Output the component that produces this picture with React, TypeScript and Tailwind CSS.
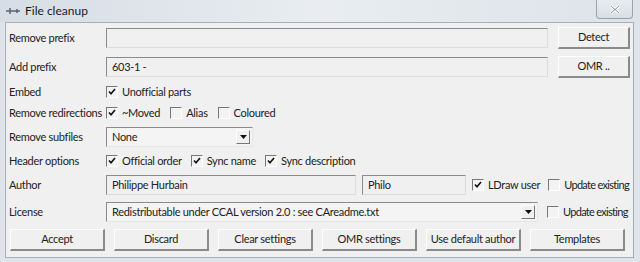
import React from "react";

const font = { fontFamily: 'Lato, "Liberation Sans", sans-serif' };

function Edit({ value, className }: { value?: string; className?: string }) {
  return (
    <div
      className={`shrink-0 h-[20px] border-t border-l border-t-[#8a8a8a] border-l-[#8a8a8a] border-b border-r border-b-[#dcdcdc] border-r-[#dcdcdc] bg-[#f0f0f0] px-[5px] flex items-center text-[11px] tracking-[-0.3px] text-[#222] whitespace-nowrap ${className ?? ""}`}
    >
      {value}
    </div>
  );
}

function Combo({ value, className }: { value: string; className?: string }) {
  return (
    <div
      className={`shrink-0 h-[20px] border-t border-l border-t-[#8a8a8a] border-l-[#8a8a8a] border-b border-r border-b-[#e6e6e6] border-r-[#e6e6e6] bg-[#f4f4f4] pl-[5px] pr-[2px] flex items-center text-[11px] tracking-[-0.3px] text-[#222] whitespace-nowrap ${className ?? ""}`}
    >
      <span className="flex-1">{value}</span>
      <span className="w-[14px] h-[14px] flex items-center justify-center border-t border-l border-white border-b border-r border-b-[#777] border-r-[#777] bg-[#f0f0f0]">
        <svg width="7" height="4" viewBox="0 0 7 4">
          <path d="M0 0h7L3.5 4z" fill="#111" />
        </svg>
      </span>
    </div>
  );
}

function Check({ label, checked, tight }: { label: string; checked?: boolean; tight?: boolean }) {
  return (
    <div className="shrink-0 flex items-center gap-[4px] h-[14px] whitespace-nowrap">
      <span className="w-[12px] h-[12px] shrink-0 border-t border-l border-t-[#777] border-l-[#777] border-b border-r border-b-[#fff] border-r-[#fff] bg-[#f3f3f3] flex items-center justify-center">
        {checked && (
          <svg width="8" height="8" viewBox="0 0 8 8">
            <path d="M1 3.5l2 2.3L7 1" stroke="#111" strokeWidth="1.6" fill="none" />
          </svg>
        )}
      </span>
      <span className={`text-[11px] text-[#222] ${tight ? "tracking-[-0.7px]" : "tracking-[-0.3px]"}`}>{label}</span>
    </div>
  );
}

function Btn({ label, className }: { label: string; className?: string }) {
  return (
    <div
      className={`shrink-0 h-[22px] border-t border-l border-white border-b-2 border-r-2 border-b-[#8a8a8a] border-r-[#8a8a8a] bg-[#f0f0f0] flex items-center justify-center text-[11px] tracking-[-0.3px] text-[#222] whitespace-nowrap ${className ?? ""}`}
    >
      {label}
    </div>
  );
}

function Label({ children }: { children: React.ReactNode }) {
  return (
    <div className="w-[100px] shrink-0 pl-[3px] text-[11px] tracking-[-0.3px] text-[#222] whitespace-nowrap">
      {children}
    </div>
  );
}

export default function App() {
  return (
    <div className="w-[640px] h-[262px] bg-[#dfe4ea] overflow-hidden relative" style={font}>
      {/* Title bar */}
      <div className="h-[22px] flex items-center pl-[5px] bg-gradient-to-r from-[#d6dde5] via-[#e9edf1] to-[#dde3e9]">
        <svg width="16" height="10" viewBox="0 0 16 10" className="mr-[4px]">
          <path d="M1 5h14M5 2v6M12 3v4" stroke="#55657a" strokeWidth="1.5" fill="none" />
        </svg>
        <span className="text-[12px] text-[#1a1a1a]">File cleanup</span>
      </div>
      <div className="absolute right-[7px] top-0 w-[37px] h-[19px] rounded-b-[4px] border border-t-0 border-[#9aa3ad] bg-gradient-to-b from-[#e8ecf0] to-[#d8dee5] flex items-center justify-center">
        <svg width="10" height="9" viewBox="0 0 10 9">
          <path d="M1 1l8 7M9 1L1 8" stroke="#fff" strokeWidth="3" />
          <path d="M1 1l8 7M9 1L1 8" stroke="#8a929c" strokeWidth="1" />
        </svg>
      </div>

      {/* Client area */}
      <div className="ml-[5px] mr-[6px] h-[236px] bg-[#f0f0f0] border border-[#a7afb8] pt-[4px] flex flex-col gap-[7px] overflow-hidden">
        <div className="flex items-center h-[22px]">
          <Label>Remove prefix</Label>
          <Edit className="w-[442px]" />
          <Btn label="Detect" className="ml-[10px] w-[72px]" />
        </div>
        <div className="flex items-center h-[22px]">
          <Label>Add prefix</Label>
          <Edit value="603-1 -" className="w-[442px]" />
          <Btn label="OMR .." className="ml-[10px] w-[72px]" />
        </div>
        <div className="flex items-center h-[14px]">
          <Label>Embed</Label>
          <Check label="Unofficial parts" checked />
        </div>
        <div className="flex items-center h-[14px]">
          <Label>Remove redirections</Label>
          <div className="flex gap-[10px]">
            <Check label="~Moved" checked />
            <Check label="Alias" />
            <Check label="Coloured" />
          </div>
        </div>
        <div className="flex items-center h-[20px]">
          <Label>Remove subfiles</Label>
          <Combo value="None" className="w-[147px]" />
        </div>
        <div className="flex items-center h-[14px]">
          <Label>Header options</Label>
          <div className="flex gap-[9px]">
            <Check label="Official order" checked />
            <Check label="Sync name" checked />
            <Check label="Sync description" checked />
          </div>
        </div>
        <div className="flex items-center h-[20px]">
          <Label>Author</Label>
          <Edit value="Philippe Hurbain" className="w-[250px]" />
          <Edit value="Philo" className="ml-[6px] w-[104px]" />
          <div className="ml-[6px]">
            <Check label="LDraw user" checked />
          </div>
          <div className="ml-[8px]">
            <Check label="Update existing" tight />
          </div>
        </div>
        <div className="flex items-center h-[20px]">
          <Label>License</Label>
          <Combo value="Redistributable under CCAL version 2.0 : see CAreadme.txt" className="w-[432px]" />
          <div className="ml-[9px]">
            <Check label="Update existing" tight />
          </div>
        </div>
        <div className="flex items-center h-[22px] pl-[4px] gap-[9px]">
          <Btn label="Accept" className="w-[95px]" />
          <Btn label="Discard" className="w-[95px]" />
          <Btn label="Clear settings" className="w-[95px]" />
          <Btn label="OMR settings" className="w-[95px]" />
          <Btn label="Use default author" className="w-[95px]" />
          <Btn label="Templates" className="w-[95px]" />
        </div>
      </div>
    </div>
  );
}
